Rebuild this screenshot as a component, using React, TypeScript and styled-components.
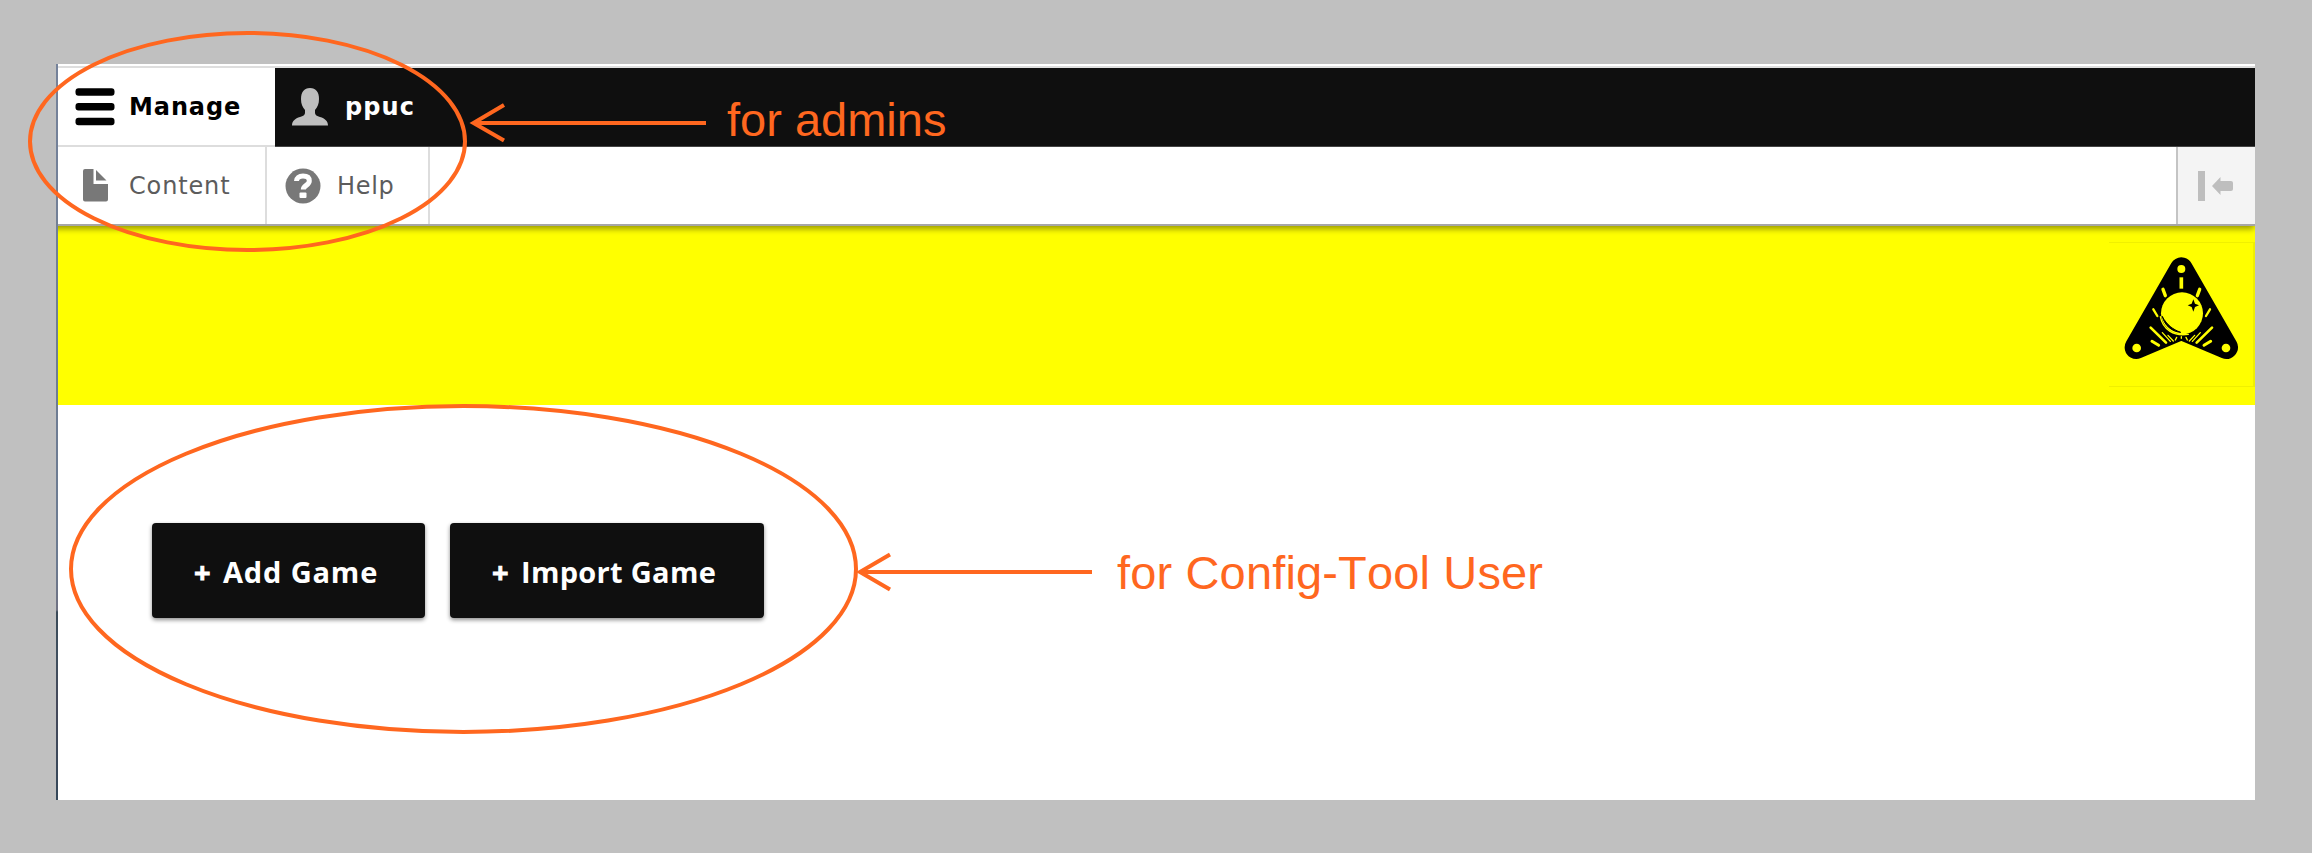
import React from "react";
import styled, { createGlobalStyle } from "styled-components";

const Global = createGlobalStyle`
  *, *::before, *::after { box-sizing: border-box; }
  body { margin: 0; background: #c0c0c0; }
`;

const Page = styled.div`
  position: relative;
  width: 2312px;
  height: 853px;
  padding: 64px 57px 53px 56px;
  background: #c0c0c0;
  overflow: hidden;
`;

const Browser = styled.div`
  display: flex;
  height: 736px;
`;

const Edge = styled.div`
  flex: none;
  width: 2px;
  background: linear-gradient(#75829a 0, #6b7a90 500px, #6f7182 546px, #3a4a58 548px, #3f4f5e 590px, #45495a 640px, #35485a 100%);
`;

const Viewport = styled.div`
  flex: 1;
  display: flex;
  flex-direction: column;
  background: #fff;
  overflow: hidden;
`;

const Strip = styled.div`
  flex: none;
  height: 4px;
  background: linear-gradient(#fff 0, #fff 2px, #dedede 2px, #dedede 4px);
`;

const Bar = styled.nav`
  flex: none;
  position: relative;
  z-index: 1;
  display: flex;
  height: 79px;
  background: #0f0f0f;
  border-bottom: 1px solid #444;
`;

const Tab = styled.a<{ $active?: boolean; $width?: number }>`
  display: flex;
  align-items: center;
  width: ${(p) => (p.$width ? p.$width + "px" : "auto")};
  height: ${(p) => (p.$active ? "79px" : "78px")};
  padding-left: 17px;
  background: ${(p) => (p.$active ? "#fff" : "transparent")};
  border-bottom: ${(p) => (p.$active ? "2px solid #ddd" : "none")};
  color: ${(p) => (p.$active ? "#000" : "#fff")};
  font: bold 24px/30px "DejaVu Sans", Verdana, sans-serif;
`;

const TabLabel = styled.span<{ $gap: number; $spacing?: number }>`
  margin-left: ${(p) => p.$gap}px;
  letter-spacing: ${(p) => p.$spacing ?? 0}px;
  white-space: nowrap;
`;

const Tray = styled.nav`
  flex: none;
  position: relative;
  display: flex;
  height: 79px;
  background: #fff;
  border-bottom: 2px solid #a6a6a6;
  box-shadow: -4px 0 6px 3px rgba(0, 0, 0, 0.4);
`;

const TrayItem = styled.a<{ $width: number; $pad: number }>`
  display: flex;
  align-items: center;
  width: ${(p) => p.$width}px;
  padding-left: ${(p) => p.$pad}px;
  border-right: 2px solid #ddd;
  color: #5c5c5c;
  font: 24px/30px "DejaVu Sans", Verdana, sans-serif;
`;

const Toggle = styled.button`
  display: flex;
  align-items: center;
  width: 79px;
  margin-left: auto;
  padding: 0 0 0 20px;
  background: #f4f4f4;
  border: 0;
  border-left: 2px solid #c4c4c4;
`;

const Header = styled.header`
  flex: none;
  display: flex;
  justify-content: flex-end;
  height: 179px;
  padding-top: 16px;
  background: #ff0;
`;

const LogoLink = styled.a`
  width: 146px;
  height: 145px;
  border: solid #f0f000;
  border-width: 1px 2px 1px 0;
`;

const Actions = styled.main`
  display: flex;
  gap: 25px;
  padding: 118px 0 0 94px;
`;

const ActionButton = styled.button<{ $width: number; $spacing: number }>`
  display: flex;
  align-items: center;
  width: ${(p) => p.$width}px;
  height: 95px;
  padding: 2px 0 0 42px;
  border: 0;
  border-radius: 4px;
  background: #0f0f0f;
  box-shadow: 0 2px 4px rgba(0, 0, 0, 0.45);
  color: #fff;
  font: bold 29px/40px "Open Sans", "Noto Sans", sans-serif;
  letter-spacing: ${(p) => p.$spacing}px;
  white-space: nowrap;
`;

const Plus = styled.span`
  width: 29px;
  letter-spacing: 0;
  -webkit-text-stroke: 0.8px #fff;
  text-align: left;
`;

const Markup = styled.svg`
  position: absolute;
  inset: 0;
  z-index: 2;
  pointer-events: none;
  fill: none;
  stroke: #ff671f;
  stroke-width: 4;
`;

const Note = styled.span<{ $x: number; $y: number; $spacing?: number }>`
  position: absolute;
  z-index: 2;
  left: ${(p) => p.$x}px;
  top: ${(p) => p.$y}px;
  color: #ff671f;
  font: 47px/54px "Liberation Sans", Arial, sans-serif;
  font-kerning: none;
  font-variant-ligatures: none;
  letter-spacing: ${(p) => p.$spacing ?? 0}px;
  white-space: nowrap;
`;

const MenuIcon = () => (
  <svg width="40" height="38" viewBox="0 0 40 38">
    <g fill="#000">
      <rect x="0.500" y="0.200" width="39" height="7.500" rx="3" />
      <rect x="0.500" y="14.900" width="39" height="7.500" rx="3" />
      <rect x="0.500" y="29.700" width="39" height="7.500" rx="3" />
    </g>
  </svg>
);

const PersonIcon = () => (
  <svg width="36" height="38" viewBox="0 0 36 38">
    <path fill="#bebebe" d="M18 0C12 0 9 4 9 11c0 5 1.500 8 4 11v3c0 2-2 3-5 4-5 1.500-8 4-8 8.500h36c0-4.500-3-7-8-8.500-3-1-5-2-5-4v-3c2.500-3 4-6 4-11C27 4 24 0 18 0z" />
  </svg>
);

const FileIcon = () => (
  <svg width="26" height="34" viewBox="0 0 26 34">
    <path fill="#787878" d="M2 0h8.500v15H25v15.500q0 2-2 2H2q-2 0-2-2V2q0-2 2-2z" />
    <path fill="#787878" d="M13 1L23.500 11.500H13z" />
  </svg>
);

const HelpIcon = () => (
  <svg width="36" height="36" viewBox="0 0 36 36">
    <circle cx="18" cy="18" r="17.500" fill="#787878" />
    <path d="M11.500 13c0-3 2.500-5 6.500-5s6.300 1.800 6.300 4.900c0 4.300-6 4.600-6 8.600" fill="none" stroke="#fff" strokeWidth="5" />
    <rect x="14.500" y="24.500" width="7" height="5.500" rx="1" fill="#fff" />
  </svg>
);

const CollapseIcon = () => (
  <svg width="37" height="32" viewBox="0 0 37 32">
    <path fill="#bebebe" d="M0 1h7v30H0zM14 16l8.500-9v4H33q2 0 2 2v6q0 2-2 2H22.500v4z" />
  </svg>
);

const Logo = () => (
  <svg width="144" height="143" viewBox="2109 243 144 143">
    <g transform="translate(2120 250) scale(0.33333)" strokeLinecap="round">
      <path d="M184 57L49 292L184 235L319 292Z" fill="#000" stroke="#000" strokeWidth="70" strokeLinejoin="round" />
      <g fill="#ff0">
        <circle cx="184" cy="57" r="12" />
        <circle cx="50" cy="294" r="13" />
        <circle cx="318" cy="294" r="13" />
        <circle cx="186" cy="190" r="63" />
      </g>
      <g fill="none" stroke="#ff0">
        <path d="M184 82V116" strokeWidth="11" strokeLinecap="butt" />
        <path d="M129 118l7 19M239 118l-7 19" strokeWidth="10" />
        <path d="M100 178l12 20M270 178l-12 20" strokeWidth="7" />
        <path d="M92 233l46 45M276 233l-46 45" strokeWidth="8" />
        <path d="M96 274l20 12M272 274l-20 12" strokeWidth="9" />
        <path d="M127 248l24 26M241 248l-24 26M144 256l16 17M224 256l-16 17" strokeWidth="4" />
        <path d="M121 200c7 38 40 60 84 53" strokeWidth="4" />
        <path d="M166 270l4-8M202 270l-4-8M184 265v-5" strokeWidth="4" />
      </g>
      <path d="M127 200c7 28 30 45 55 47c-24-9-41-22-55-47z" fill="#000" stroke="#000" strokeWidth="3" />
      <path d="M220 148l5 13l12 5l-12 5l-5 14l-5-14l-12-5l12-5z" fill="#000" />
    </g>
  </svg>
);

export default function App() {
  return (
    <Page>
      <Global />
      <Browser>
        <Edge />
        <Viewport>
          <Strip />
          <Bar>
            <Tab $active $width={217}>
              <MenuIcon />
              <TabLabel $gap={14} $spacing={0.9}>Manage</TabLabel>
            </Tab>
            <Tab>
              <PersonIcon />
              <TabLabel $gap={17} $spacing={1.1}>ppuc</TabLabel>
            </Tab>
          </Bar>
          <Tray>
            <TrayItem $width={209} $pad={25}>
              <FileIcon />
              <TabLabel $gap={20} $spacing={0.85}>Content</TabLabel>
            </TrayItem>
            <TrayItem $width={163} $pad={18}>
              <HelpIcon />
              <TabLabel $gap={16} $spacing={0.7}>Help</TabLabel>
            </TrayItem>
            <Toggle>
              <CollapseIcon />
            </Toggle>
          </Tray>
          <Header>
            <LogoLink>
              <Logo />
            </LogoLink>
          </Header>
          <Actions>
            <ActionButton $width={273} $spacing={0.85}>
              <Plus>+</Plus>Add Game
            </ActionButton>
            <ActionButton $width={314} $spacing={0.3}>
              <Plus>+</Plus>Import Game
            </ActionButton>
          </Actions>
        </Viewport>
      </Browser>
      <Markup width="2312" height="853" viewBox="0 0 2312 853">
        <ellipse cx="247.500" cy="141.500" rx="217.500" ry="108.500" />
        <ellipse cx="463.500" cy="569" rx="392.500" ry="163" />
        <path d="M706 123H474M504 105L473.500 123L504 140.500" />
        <path d="M1092 572H860M890 554.500L860 572L890 589.500" />
      </Markup>
      <Note $x={727} $y={93}>for admins</Note>
      <Note $x={1117} $y={546} $spacing={0.15}>for Config-Tool User</Note>
    </Page>
  );
}
